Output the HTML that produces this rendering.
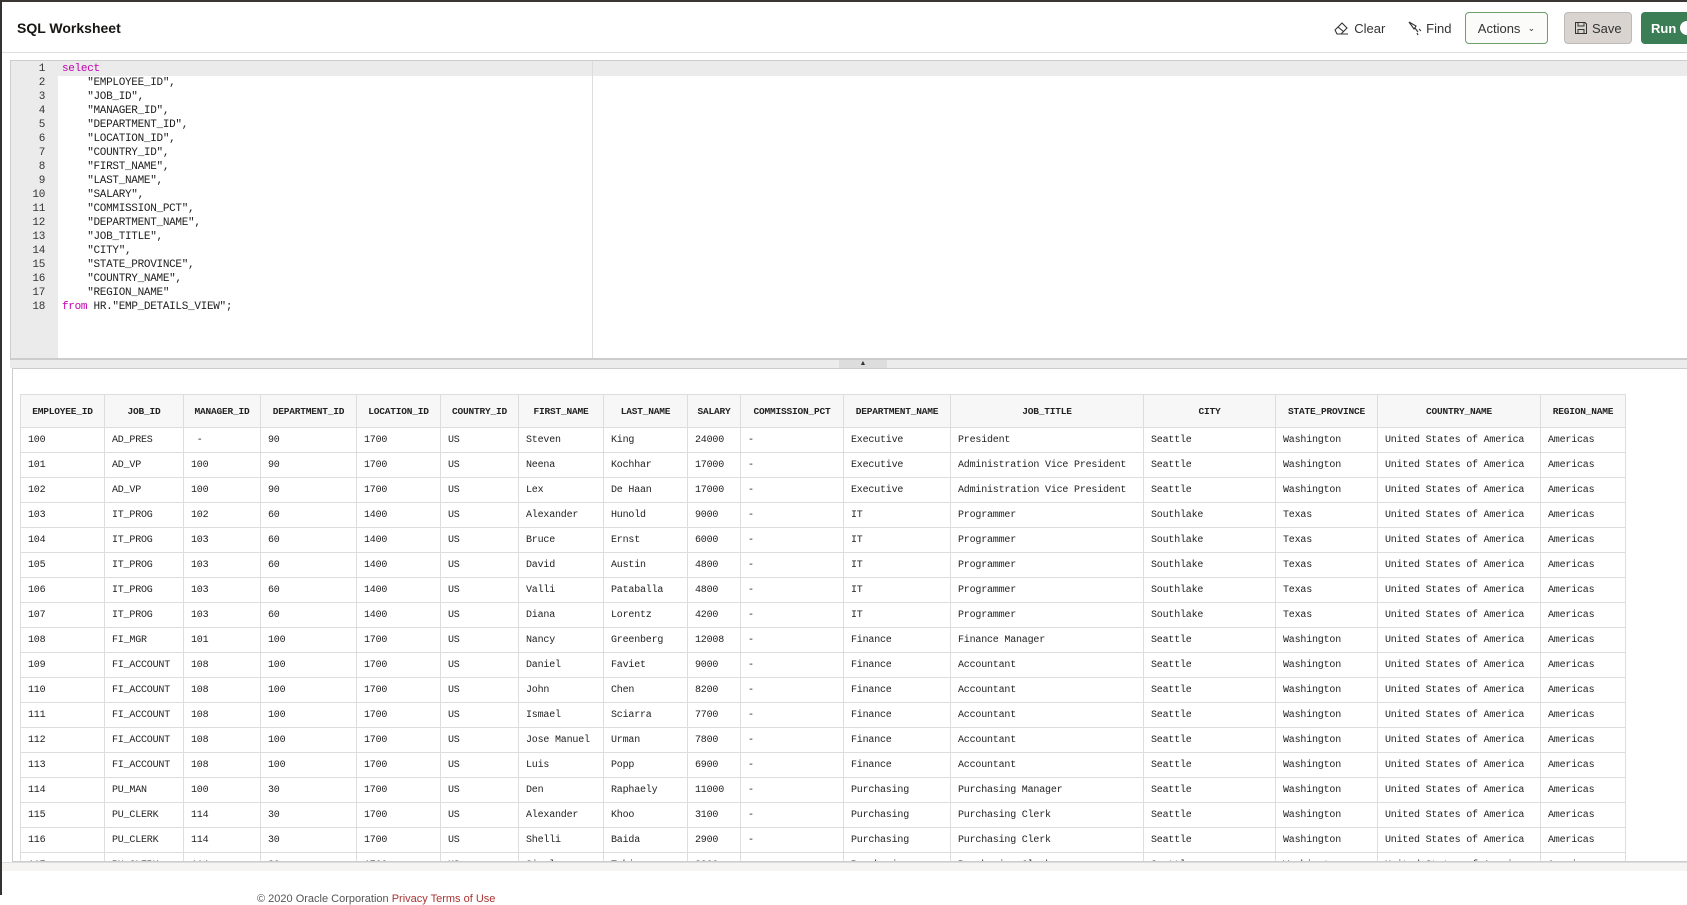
<!DOCTYPE html>
<html><head><meta charset="utf-8"><style>
*{box-sizing:border-box;margin:0;padding:0}
body{width:1687px;height:895px;overflow:hidden;background:#fff;font-family:"Liberation Sans",sans-serif;position:relative;border-left:2px solid #333}
.top{position:absolute;left:0;top:0;width:1687px;height:2px;background:#3a3633}
.title{position:absolute;left:15px;top:20px;font-size:14px;font-weight:bold;color:#161513}
.hdrline{position:absolute;left:0;top:52px;width:1687px;height:1px;background:#ddd}
.btn{position:absolute;top:12px;height:32px;font-size:13px;color:#333;display:flex;align-items:center;justify-content:center;border-radius:4px}
.editor{position:absolute;left:8px;top:60px;width:1679px;height:299px;border:1px solid #ccc;border-right:none;background:#fff}
.gutter{position:absolute;left:0;top:0;width:47px;height:100%;background:#ebebeb}
.band{position:absolute;left:0;top:0;width:100%;height:15px;background:#ebebeb}
.code{position:absolute;left:0;top:1px;font-family:"Liberation Mono",monospace;font-size:11px;line-height:14px;color:#222;white-space:pre;letter-spacing:-0.3px}
.code .n{display:inline-block;width:34px;text-align:right;color:#333;margin-right:17px}
.kw{color:#c400b0}
.vline{position:absolute;left:581px;top:0;width:1px;height:100%;background:#ddd}
.split{position:absolute;left:8px;top:359px;width:1679px;height:9px;background:#ececec;border-top:1px solid #ccc}
.handle{position:absolute;left:829px;top:0;width:48px;height:8px;background:#ddd;font-size:7px;text-align:center;line-height:8px;color:#333}
.res{position:absolute;left:10px;top:368px;width:1677px;height:494px;border:1px solid #ccc;border-right:none;overflow:hidden}
table{position:absolute;left:7px;top:25px;border-collapse:collapse;table-layout:fixed;width:1605px;font-family:"Liberation Mono",monospace;font-size:10px;color:#222;letter-spacing:-0.2px}
td,th{border:1px solid #ddd;height:25px;padding:0 7px;white-space:nowrap;overflow:hidden;text-align:left;font-weight:normal}
th{height:33px;background:#f7f7f7;font-weight:bold;text-align:center;font-size:9.5px;padding:0 3px}
.foot{position:absolute;left:0;top:862px;width:1687px;height:9px;background:#f5f4f2;border-top:1px solid #ddd}
.ftxt{position:absolute;left:255px;top:893px;font-size:11px;color:#555}
</style></head><body>
<div class="top"></div>
<div class="title">SQL Worksheet</div>
<div class="btn" style="left:1328px;width:58px"><svg width="18" height="16" viewBox="0 0 18 16"><path d="M2 10 L9 3 L14 8 L8 14 L4 14 Z M5 7 L11 12 M4 14 L15 14" fill="none" stroke="#333" stroke-width="1.1"/></svg>&nbsp;Clear</div>
<div class="btn" style="left:1402px;width:50px"><svg width="16" height="16" viewBox="0 0 16 16"><path d="M2 2 L9 6 L7 9 Z M8 8 L11 12 M12 9 L14 11 M10 13 L11 15" fill="none" stroke="#333" stroke-width="1.1"/></svg>&nbsp;Find</div>
<div class="btn" style="left:1463px;width:83px;border:1px solid #6f9e6f;background:#fbfbf9">Actions&nbsp;&nbsp;<span style="font-size:9px">&#8964;</span></div>
<div class="btn" style="left:1562px;width:68px;border:1px solid #bbb;background:#d9d4cf"><svg width="14" height="14" viewBox="0 0 14 14"><path d="M1.5 1.5 H11 L12.5 3 V12.5 H1.5 Z M4 1.5 V5 H10 V1.5 M4 12.5 V8.5 H10 V12.5" fill="none" stroke="#333"/></svg>&nbsp;Save</div>
<div class="btn" style="left:1639px;width:60px;background:#3b7e55;color:#fff;font-weight:bold;justify-content:flex-start;padding-left:10px;border-radius:4px 0 0 4px">Run&nbsp;<span style="display:inline-block;width:14px;height:14px;border-radius:50%;background:#fff"></span></div>
<div class="hdrline"></div>
<div class="editor"><div class="gutter"></div><div class="band"></div><div class="vline"></div>
<div class="code"><span class="n">1</span><span class="kw">select</span>
<span class="n">2</span>    "EMPLOYEE_ID",
<span class="n">3</span>    "JOB_ID",
<span class="n">4</span>    "MANAGER_ID",
<span class="n">5</span>    "DEPARTMENT_ID",
<span class="n">6</span>    "LOCATION_ID",
<span class="n">7</span>    "COUNTRY_ID",
<span class="n">8</span>    "FIRST_NAME",
<span class="n">9</span>    "LAST_NAME",
<span class="n">10</span>    "SALARY",
<span class="n">11</span>    "COMMISSION_PCT",
<span class="n">12</span>    "DEPARTMENT_NAME",
<span class="n">13</span>    "JOB_TITLE",
<span class="n">14</span>    "CITY",
<span class="n">15</span>    "STATE_PROVINCE",
<span class="n">16</span>    "COUNTRY_NAME",
<span class="n">17</span>    "REGION_NAME"
<span class="n">18</span><span class="kw">from</span> HR."EMP_DETAILS_VIEW";</div></div>
<div class="split"><div class="handle">&#9650;</div></div>
<div class="res"><table>
<colgroup><col style="width:84px"><col style="width:79px"><col style="width:77px"><col style="width:96px"><col style="width:84px"><col style="width:78px"><col style="width:85px"><col style="width:84px"><col style="width:53px"><col style="width:103px"><col style="width:107px"><col style="width:193px"><col style="width:132px"><col style="width:102px"><col style="width:163px"><col style="width:85px"></colgroup>
<tr><th>EMPLOYEE_ID</th><th>JOB_ID</th><th>MANAGER_ID</th><th>DEPARTMENT_ID</th><th>LOCATION_ID</th><th>COUNTRY_ID</th><th>FIRST_NAME</th><th>LAST_NAME</th><th>SALARY</th><th>COMMISSION_PCT</th><th>DEPARTMENT_NAME</th><th>JOB_TITLE</th><th>CITY</th><th>STATE_PROVINCE</th><th>COUNTRY_NAME</th><th>REGION_NAME</th></tr>
<tr><td>100</td><td>AD_PRES</td><td>&nbsp;-</td><td>90</td><td>1700</td><td>US</td><td>Steven</td><td>King</td><td>24000</td><td>-</td><td>Executive</td><td>President</td><td>Seattle</td><td>Washington</td><td>United States of America</td><td>Americas</td></tr>
<tr><td>101</td><td>AD_VP</td><td>100</td><td>90</td><td>1700</td><td>US</td><td>Neena</td><td>Kochhar</td><td>17000</td><td>-</td><td>Executive</td><td>Administration Vice President</td><td>Seattle</td><td>Washington</td><td>United States of America</td><td>Americas</td></tr>
<tr><td>102</td><td>AD_VP</td><td>100</td><td>90</td><td>1700</td><td>US</td><td>Lex</td><td>De Haan</td><td>17000</td><td>-</td><td>Executive</td><td>Administration Vice President</td><td>Seattle</td><td>Washington</td><td>United States of America</td><td>Americas</td></tr>
<tr><td>103</td><td>IT_PROG</td><td>102</td><td>60</td><td>1400</td><td>US</td><td>Alexander</td><td>Hunold</td><td>9000</td><td>-</td><td>IT</td><td>Programmer</td><td>Southlake</td><td>Texas</td><td>United States of America</td><td>Americas</td></tr>
<tr><td>104</td><td>IT_PROG</td><td>103</td><td>60</td><td>1400</td><td>US</td><td>Bruce</td><td>Ernst</td><td>6000</td><td>-</td><td>IT</td><td>Programmer</td><td>Southlake</td><td>Texas</td><td>United States of America</td><td>Americas</td></tr>
<tr><td>105</td><td>IT_PROG</td><td>103</td><td>60</td><td>1400</td><td>US</td><td>David</td><td>Austin</td><td>4800</td><td>-</td><td>IT</td><td>Programmer</td><td>Southlake</td><td>Texas</td><td>United States of America</td><td>Americas</td></tr>
<tr><td>106</td><td>IT_PROG</td><td>103</td><td>60</td><td>1400</td><td>US</td><td>Valli</td><td>Pataballa</td><td>4800</td><td>-</td><td>IT</td><td>Programmer</td><td>Southlake</td><td>Texas</td><td>United States of America</td><td>Americas</td></tr>
<tr><td>107</td><td>IT_PROG</td><td>103</td><td>60</td><td>1400</td><td>US</td><td>Diana</td><td>Lorentz</td><td>4200</td><td>-</td><td>IT</td><td>Programmer</td><td>Southlake</td><td>Texas</td><td>United States of America</td><td>Americas</td></tr>
<tr><td>108</td><td>FI_MGR</td><td>101</td><td>100</td><td>1700</td><td>US</td><td>Nancy</td><td>Greenberg</td><td>12008</td><td>-</td><td>Finance</td><td>Finance Manager</td><td>Seattle</td><td>Washington</td><td>United States of America</td><td>Americas</td></tr>
<tr><td>109</td><td>FI_ACCOUNT</td><td>108</td><td>100</td><td>1700</td><td>US</td><td>Daniel</td><td>Faviet</td><td>9000</td><td>-</td><td>Finance</td><td>Accountant</td><td>Seattle</td><td>Washington</td><td>United States of America</td><td>Americas</td></tr>
<tr><td>110</td><td>FI_ACCOUNT</td><td>108</td><td>100</td><td>1700</td><td>US</td><td>John</td><td>Chen</td><td>8200</td><td>-</td><td>Finance</td><td>Accountant</td><td>Seattle</td><td>Washington</td><td>United States of America</td><td>Americas</td></tr>
<tr><td>111</td><td>FI_ACCOUNT</td><td>108</td><td>100</td><td>1700</td><td>US</td><td>Ismael</td><td>Sciarra</td><td>7700</td><td>-</td><td>Finance</td><td>Accountant</td><td>Seattle</td><td>Washington</td><td>United States of America</td><td>Americas</td></tr>
<tr><td>112</td><td>FI_ACCOUNT</td><td>108</td><td>100</td><td>1700</td><td>US</td><td>Jose Manuel</td><td>Urman</td><td>7800</td><td>-</td><td>Finance</td><td>Accountant</td><td>Seattle</td><td>Washington</td><td>United States of America</td><td>Americas</td></tr>
<tr><td>113</td><td>FI_ACCOUNT</td><td>108</td><td>100</td><td>1700</td><td>US</td><td>Luis</td><td>Popp</td><td>6900</td><td>-</td><td>Finance</td><td>Accountant</td><td>Seattle</td><td>Washington</td><td>United States of America</td><td>Americas</td></tr>
<tr><td>114</td><td>PU_MAN</td><td>100</td><td>30</td><td>1700</td><td>US</td><td>Den</td><td>Raphaely</td><td>11000</td><td>-</td><td>Purchasing</td><td>Purchasing Manager</td><td>Seattle</td><td>Washington</td><td>United States of America</td><td>Americas</td></tr>
<tr><td>115</td><td>PU_CLERK</td><td>114</td><td>30</td><td>1700</td><td>US</td><td>Alexander</td><td>Khoo</td><td>3100</td><td>-</td><td>Purchasing</td><td>Purchasing Clerk</td><td>Seattle</td><td>Washington</td><td>United States of America</td><td>Americas</td></tr>
<tr><td>116</td><td>PU_CLERK</td><td>114</td><td>30</td><td>1700</td><td>US</td><td>Shelli</td><td>Baida</td><td>2900</td><td>-</td><td>Purchasing</td><td>Purchasing Clerk</td><td>Seattle</td><td>Washington</td><td>United States of America</td><td>Americas</td></tr>
<tr><td>117</td><td>PU_CLERK</td><td>114</td><td>30</td><td>1700</td><td>US</td><td>Sigal</td><td>Tobias</td><td>2800</td><td>-</td><td>Purchasing</td><td>Purchasing Clerk</td><td>Seattle</td><td>Washington</td><td>United States of America</td><td>Americas</td></tr>
</table></div>
<div class="foot"></div>
<div class="ftxt">© 2020 Oracle Corporation <span style="color:#a33">Privacy</span> <span style="color:#a33">Terms of Use</span></div>
</body></html>
